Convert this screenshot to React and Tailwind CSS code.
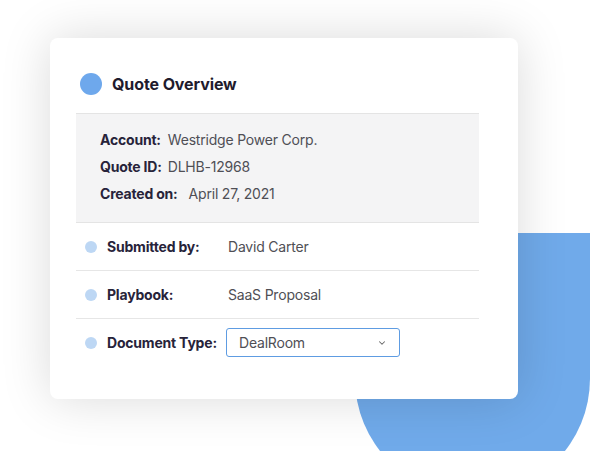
import { ChevronDown } from 'lucide-react';

const details = [
    { label: 'Account:', value: 'Westridge Power Corp.', gap: 'ml-[7px]' },
    { label: 'Quote ID:', value: 'DLHB-12968', gap: 'ml-[6px]' },
    { label: 'Created on:', value: 'April 27, 2021', gap: 'ml-[11px]' },
];

const rows = [
    { label: 'Submitted by:', value: 'David Carter' },
    { label: 'Playbook:', value: 'SaaS Proposal' },
];

function Dot() {
    return <span className="w-[12px] h-[12px] rounded-full bg-[#bdd7f4] shrink-0" />;
}

export default function App() {
    return (
        <div
            className="relative w-full h-[451px] overflow-hidden bg-white"
            style={{ fontFamily: 'Inter, "Open Sans", sans-serif' }}
        >
            {/* decorative blue arch behind the card */}
            <div className="absolute left-[355px] top-[233px] w-[235px] h-[263px] rounded-b-full bg-[#70aaea]" />

            <div className="relative ml-[50px] mt-[38px] w-[468px] h-[361px] bg-white rounded-[8px] shadow-[0_0_50px_rgba(0,0,0,0.15)] pt-[35px] pl-[26px] pr-[39px] tracking-[-0.2px]">
                <div className="flex items-center h-[22px] pl-[4px] gap-[10px] mb-[18px]">
                    <span className="w-[22px] h-[22px] rounded-full bg-[#6ea8ec]" />
                    <h2 className="text-[16px] font-bold text-[#1f1b2d] tracking-[-0.1px]">Quote Overview</h2>
                </div>

                <div className="bg-[#f4f4f5] border-y border-[#e4e4e4] pt-[12px] pb-[15px] pl-[24px]">
                    {details.map((d) => (
                        <div key={d.label} className="flex items-center h-[27px] text-[14px]">
                            <span className="font-bold text-[#27233a]">{d.label}</span>
                            <span className={`${d.gap} text-[#4f4f55]`}>{d.value}</span>
                        </div>
                    ))}
                </div>

                {rows.map((r) => (
                    <div key={r.label} className="flex items-center h-[48px] border-b border-[#e6e6e6] pl-[9px] text-[14px]">
                        <Dot />
                        <span className="ml-[10px] w-[121px] font-bold text-[#27233a]">{r.label}</span>
                        <span className="text-[#4f4f55]">{r.value}</span>
                    </div>
                ))}

                <div className="flex items-center h-[47px] pl-[9px] text-[14px]">
                    <Dot />
                    <span className="ml-[10px] w-[119px] font-bold text-[#27233a]">Document Type:</span>
                    <div className="flex items-center justify-between w-[174px] h-[29px] border-[1.5px] border-[#5e9ce2] rounded-[3px] pl-[12px] pr-[12px]">
                        <span className="text-[#4f4f55]">DealRoom</span>
                        <ChevronDown size={10} strokeWidth={2.5} className="text-[#666]" />
                    </div>
                </div>
            </div>
        </div>
    );
}
